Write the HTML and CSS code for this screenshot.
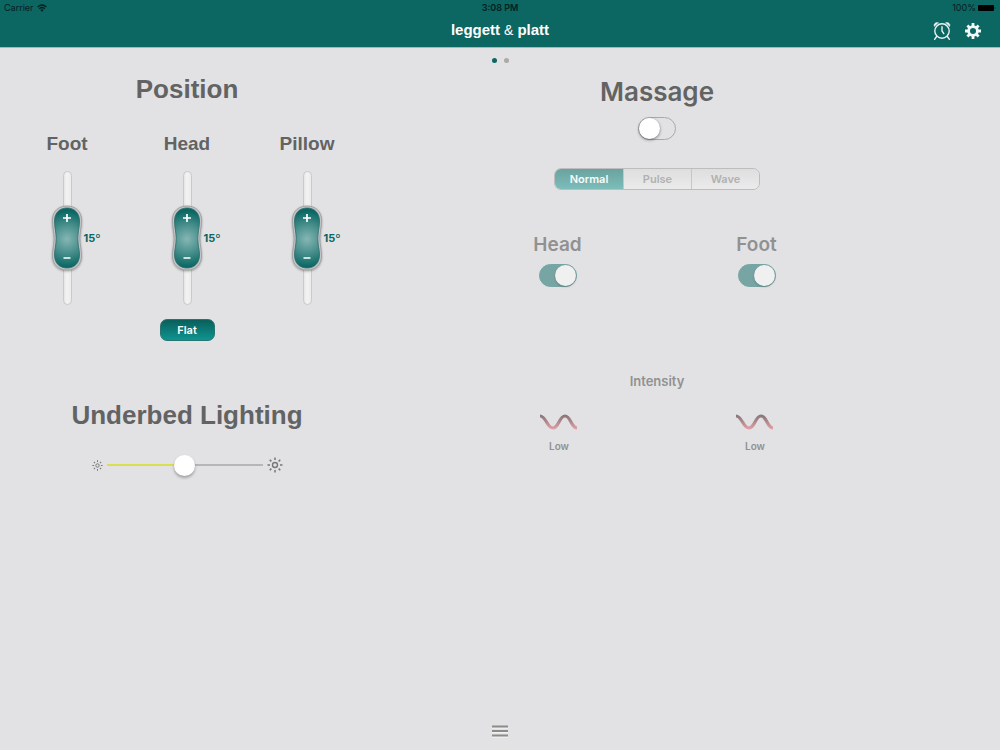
FILE: index.html
```html
<!DOCTYPE html>
<html lang="en">
<head>
<meta charset="utf-8">
<meta name="viewport" content="width=device-width, initial-scale=1">
<title>Leggett &amp; Platt</title>
<link rel="stylesheet" href="styles.css">
</head>
<body>
<svg class="defs" aria-hidden="true">
  <defs>
    <radialGradient id="pillFill" gradientUnits="userSpaceOnUse" cx="18" cy="36" r="28">
      <stop offset="0" stop-color="#86b6b4"/>
      <stop offset="0.45" stop-color="#4f9491"/>
      <stop offset="1" stop-color="#0a6763"/>
    </radialGradient>
    <linearGradient id="waveFill" gradientUnits="userSpaceOnUse" x1="0" y1="2" x2="0" y2="17">
      <stop offset="0" stop-color="#857679"/>
      <stop offset="0.5" stop-color="#b58a90"/>
      <stop offset="1" stop-color="#e8a3aa"/>
    </linearGradient>
    <symbol id="pill" viewBox="0 0 36 70">
      <path d="M18 3C9.500 3 3.500 8.500 3.500 17C3.500 25 5.200 29 5.200 35.500C5.200 42 3.500 46 3.500 53C3.500 61.500 9.500 67 18 67C26.500 67 32.500 61.500 32.500 53C32.500 46 30.800 42 30.800 35.500C30.800 29 32.500 25 32.500 17C32.500 8.500 26.500 3 18 3Z" fill="#c6c6c8" stroke="#a2a2a4"/>
      <path d="M18 5C10.500 5 5.500 10 5.500 18C5.500 25 7.200 29 7.200 35.500C7.200 42 5.500 46 5.500 52C5.500 60 10.500 65 18 65C25.500 65 30.500 60 30.500 52C30.500 46 28.800 42 28.800 35.500C28.800 29 30.500 25 30.500 18C30.500 10 25.500 5 18 5Z" fill="url(#pillFill)" stroke="#2c6b68" stroke-width=".8"/>
      <path d="M14 15h8M18 11v8M14.500 55h7" stroke="#fff" stroke-width="1.700"/>
    </symbol>
    <symbol id="wave" viewBox="0 0 38 18">
      <path d="M0 3C6 3 7 15 13 15S19 3 25 3S31 15 37 15" fill="none" stroke="url(#waveFill)" stroke-width="3.200"/>
    </symbol>
    <symbol id="sun" viewBox="0 0 16 16">
      <circle cx="8" cy="8" r="2.500" fill="none" stroke="#777" stroke-width="1.400"/>
      <path d="M8 .5v2.500M8 13v2.500M.5 8H3M13 8h2.500M2.700 2.700l1.700 1.700M11.600 11.600l1.700 1.700M2.700 13.300l1.700-1.700M11.600 4.400l1.700-1.700" stroke="#777" stroke-width="1.500"/>
    </symbol>
  </defs>
</svg>

<header class="header">
  <div class="status">
    <span class="status-left">Carrier
      <svg width="10" height="8" viewBox="0 0 10 8" fill="none" stroke="#06201f" stroke-width="1.300"><path d="M.6 2.900Q5-1 9.400 2.900M2.300 4.700Q5 2.300 7.700 4.700"/><path d="M5 7.800L3.400 6Q5 4.700 6.600 6Z" fill="#06201f" stroke="none"/></svg>
    </span>
    <span class="time">3:08 PM</span>
    <span class="status-right">100%
      <svg width="18" height="8" viewBox="0 0 18 8"><rect x="0" y="1" width="16" height="6" rx="1" fill="#000"/><path d="M16.800 2.700Q18 4 16.800 5.300Z" fill="#000"/></svg>
    </span>
  </div>
  <nav class="nav">
    <h1 class="brand"><span>leggett</span><span class="amp">&amp;</span><span>platt</span></h1>
    <div class="actions">
      <button type="button" class="icon-button" aria-label="Alarm">
        <svg width="18" height="20" viewBox="0 0 18 20" fill="none" stroke="#e9f3f2" stroke-width="1.400" stroke-linecap="round"><circle cx="9" cy="10" r="7.200"/><path d="M9 5.700V10l1.800 2.700M3.600 15.500L1.600 18.300M14.400 15.500l2 2.800"/><path d="M1.300 5.200C.2 3.500 2.600.9 5.200 1.800ZM16.700 5.200c1.100-1.700-1.300-4.300-3.900-3.400Z" fill="#e9f3f2" stroke-width=".6"/></svg>
      </button>
      <button type="button" class="icon-button" aria-label="Settings">
        <svg width="16" height="16" viewBox="0 0 16 16" fill="none" stroke="#f2f8f8"><circle cx="8" cy="8" r="4.400" stroke-width="2.800"/><path d="M8 0v3M8 13v3M0 8h3M13 8h3M2.400 2.400l2 2M11.600 11.600l2 2M2.400 13.600l2-2M11.600 4.400l2-2" stroke-width="2.800"/></svg>
      </button>
    </div>
  </nav>
</header>

<div class="dots"><span class="dot dot-on"></span><span class="dot"></span></div>

<main class="panels">
  <div class="panel left">
    <h2 class="title">Position</h2>
    <div class="positions">
      <section class="position">
        <h3 class="label">Foot</h3>
        <div class="adjust">
          <div class="track">
            <svg class="pill" width="36" height="70"><use href="#pill"/></svg>
            <button type="button" class="step" aria-label="Raise foot"></button>
            <button type="button" class="step" aria-label="Lower foot"></button>
          </div>
          <output class="angle">15º</output>
        </div>
      </section>
      <section class="position">
        <h3 class="label">Head</h3>
        <div class="adjust">
          <div class="track">
            <svg class="pill" width="36" height="70"><use href="#pill"/></svg>
            <button type="button" class="step" aria-label="Raise head"></button>
            <button type="button" class="step" aria-label="Lower head"></button>
          </div>
          <output class="angle">15º</output>
        </div>
      </section>
      <section class="position">
        <h3 class="label">Pillow</h3>
        <div class="adjust">
          <div class="track">
            <svg class="pill" width="36" height="70"><use href="#pill"/></svg>
            <button type="button" class="step" aria-label="Raise pillow"></button>
            <button type="button" class="step" aria-label="Lower pillow"></button>
          </div>
          <output class="angle">15º</output>
        </div>
      </section>
    </div>
    <button type="button" class="flat">Flat</button>

    <h2 class="title lighting-title" id="lighting">Underbed Lighting</h2>
    <div class="lighting">
      <svg width="11" height="11"><use href="#sun"/></svg>
      <input class="slider" type="range" min="0" max="100" value="50" aria-labelledby="lighting">
      <svg width="16" height="16"><use href="#sun"/></svg>
    </div>
  </div>

  <div class="panel right">
    <h2 class="title"><label for="massage">Massage</label></h2>
    <input class="switch" id="massage" type="checkbox" role="switch">
    <div class="segments" role="group" aria-label="Massage mode">
      <button type="button" class="segment segment-on" aria-pressed="true">Normal</button>
      <button type="button" class="segment" aria-pressed="false">Pulse</button>
      <button type="button" class="segment" aria-pressed="false">Wave</button>
    </div>
    <div class="zones">
      <div class="zone">
        <label class="label" for="massage-head">Head</label>
        <input class="switch muted" id="massage-head" type="checkbox" role="switch" checked>
      </div>
      <div class="zone">
        <label class="label" for="massage-foot">Foot</label>
        <input class="switch muted" id="massage-foot" type="checkbox" role="switch" checked>
      </div>
    </div>
    <h3 class="intensity">Intensity</h3>
    <div class="levels">
      <button type="button" class="level"><svg width="38" height="18"><use href="#wave"/></svg>Low</button>
      <button type="button" class="level"><svg width="38" height="18"><use href="#wave"/></svg>Low</button>
    </div>
  </div>
</main>

<footer class="footer">
  <button type="button" class="icon-button" aria-label="Menu">
    <svg width="16" height="14" viewBox="0 0 16 14"><path d="M0 4h16M0 8.500h16M0 13h16" stroke="#f1f1f0" stroke-width="1.500"/><path d="M0 2.500h16M0 7h16M0 11.500h16" stroke="#8b8b8a" stroke-width="2"/></svg>
  </button>
</footer>
</body>
</html>
```
FILE: styles.css
```css
* { box-sizing: border-box; }

body {
  margin: 0;
  min-height: 100vh;
  display: flex;
  flex-direction: column;
  background: #e2e2e4;
  color: #636363;
  font-family: Inter, "Liberation Sans", sans-serif;
}

h1, h2, h3 { margin: 0; }

button {
  margin: 0;
  padding: 0;
  border: 0;
  background: none;
  font-family: inherit;
  cursor: pointer;
}

svg { display: block; }

.defs { position: absolute; width: 0; height: 0; }

/* Header */
.header {
  background: #0c6662;
  border-bottom: 1px solid #a3b8b8;
}

.status {
  display: grid;
  grid-template-columns: 1fr auto 1fr;
  align-items: center;
  height: 15px;
  padding: 0 4px;
  font-size: 9px;
  color: #06201f;
}

.status-left, .status-right {
  display: flex;
  align-items: center;
  gap: 3px;
}

.status-right { justify-content: flex-end; gap: 2px; }

.time { font-weight: 600; }

.nav {
  display: grid;
  grid-template-columns: 1fr auto 1fr;
  align-items: center;
  height: 32px;
  padding: 0 19px;
}

.brand {
  grid-column: 2;
  display: flex;
  gap: 4px;
  color: #fff;
  font: bold 15px/30px "Liberation Sans", Arial, sans-serif;
  padding-bottom: 2px;
}

.amp { font-weight: normal; font-size: 14px; }

.actions {
  display: flex;
  align-items: center;
  justify-content: flex-end;
  gap: 14px;
}

/* Page indicator */
.dots {
  display: flex;
  justify-content: center;
  align-items: center;
  gap: 7px;
  height: 25px;
}

.dot {
  width: 5px;
  height: 5px;
  border-radius: 50%;
  background: #aaa;
}

.dot-on { background: #0c6662; }

/* Panels */
.panels {
  flex: 1;
  display: grid;
  grid-template-columns: 374fr 566fr 60fr;
}

.panel {
  display: flex;
  flex-direction: column;
  align-items: center;
}

.right { padding-top: 3px; }

.title { font-size: 26px; line-height: 32px; font-weight: 600; }

.label { font-size: 19px; line-height: 24px; font-weight: 600; }

.left .title, .left .label { font-family: "Liberation Sans", Arial, sans-serif; }

.positions {
  display: grid;
  grid-template-columns: repeat(3, 120px);
  margin-top: 27px;
}

.left .label { text-align: center; }

.adjust {
  display: grid;
  grid-template-columns: 1fr 9px 1fr;
  align-items: center;
  margin-top: 15px;
}

.track {
  grid-column: 2;
  position: relative;
  display: flex;
  flex-direction: column;
  align-items: center;
  justify-content: center;
  height: 134px;
  border: 1px solid #cacaca;
  border-radius: 5px;
  background: linear-gradient(90deg, #e6e6e6, #f3f3f3 40%, #ececec);
}

.pill {
  position: absolute;
  top: 50%;
  left: 50%;
  transform: translate(-50%, -50%);
  filter: drop-shadow(0 1px 1px rgba(0, 0, 0, 0.3));
}

.step {
  position: relative;
  width: 26px;
  height: 30px;
  flex: none;
}

.angle {
  padding-left: 12px;
  font-size: 11px;
  font-weight: 700;
  color: #0c6662;
}

.flat {
  margin-top: 14px;
  width: 55px;
  height: 22px;
  border: 1px solid #267571;
  border-radius: 7px;
  background: linear-gradient(#0a5f5b, #0f9490);
  color: #fff;
  font-size: 11px;
  font-weight: 600;
}

.lighting-title { margin-top: 58px; }

.lighting {
  display: flex;
  align-items: center;
  gap: 4px;
  margin-top: 22px;
}

.slider {
  appearance: none;
  width: 156px;
  height: 24px;
  margin: 0;
  background: linear-gradient(90deg, #d9df4e 50%, #b6b6b6 50%) center / 100% 2px no-repeat;
}

.slider::-webkit-slider-thumb {
  appearance: none;
  width: 21px;
  height: 21px;
  border-radius: 50%;
  background: #fff;
  box-shadow: 0 2px 3px rgba(0, 0, 0, 0.3);
}

/* Massage */
.switch {
  appearance: none;
  display: flex;
  align-items: center;
  width: 38px;
  height: 23px;
  margin: 9px 0 0;
  border: 1px solid #a9a9a9;
  border-radius: 12px;
  cursor: pointer;
}

.switch::before {
  content: "";
  width: 21px;
  height: 21px;
  border-radius: 50%;
  background: #fff;
  box-shadow: 0 1px 3px rgba(0, 0, 0, 0.5);
}

.switch:checked {
  justify-content: flex-end;
  border-color: #77a5a4;
  background: #77a5a4;
}

.muted { margin-top: 7px; }

.muted::before { background: #f0f0f0; box-shadow: 0 1px 2px rgba(0, 0, 0, 0.25); }

.segments {
  display: grid;
  grid-template-columns: repeat(3, 68px);
  margin-top: 28px;
  border: 1px solid #bdbdbd;
  border-radius: 7px;
  overflow: hidden;
}

.segment {
  height: 20px;
  border-left: 1px solid #c6c6c6;
  background: linear-gradient(#dedede, #ebebeb);
  color: #b1b1b1;
  font-size: 11px;
  font-weight: 600;
}

.segment-on {
  border-left: 0;
  background: linear-gradient(#6ba29f, #7cbdba);
  color: #f7fbfb;
}

.zones {
  display: grid;
  grid-template-columns: repeat(2, 199px);
  margin-top: 43px;
}

.zone {
  display: flex;
  flex-direction: column;
  align-items: center;
}

.zone .label { color: #919191; }

.intensity {
  margin-top: 84px;
  font-size: 13px;
  line-height: 20px;
  font-weight: 600;
  color: #919191;
}

.levels {
  display: grid;
  grid-template-columns: repeat(2, 196px);
  justify-items: center;
  margin-top: 22px;
}

.level {
  display: flex;
  flex-direction: column;
  align-items: center;
  gap: 8px;
  font-size: 10px;
  line-height: 14px;
  font-weight: 600;
  color: #919191;
}

.footer {
  display: flex;
  justify-content: center;
  padding-bottom: 12px;
}
```
